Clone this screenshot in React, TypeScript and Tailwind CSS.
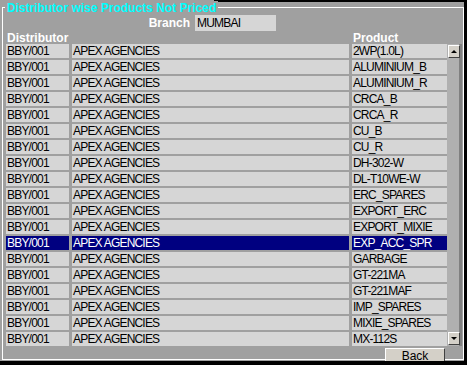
import React from "react";

const products = [
  "2WP(1.0L)",
  "ALUMINIUM_B",
  "ALUMINIUM_R",
  "CRCA_B",
  "CRCA_R",
  "CU_B",
  "CU_R",
  "DH-302-W",
  "DL-T10WE-W",
  "ERC_SPARES",
  "EXPORT_ERC",
  "EXPORT_MIXIE",
  "EXP_ACC_SPR",
  "GARBAGE",
  "GT-221MA",
  "GT-221MAF",
  "IMP_SPARES",
  "MIXIE_SPARES",
  "MX-112S",
];

const selected = "EXP_ACC_SPR";

function Row({ product }: { product: string }) {
  const on = product === selected;
  const cell = on ? "bg-[#000080] text-white" : "bg-[#d6d6d6] text-black";
  return (
    <div className="flex h-[16px] gap-[3px] pb-[2px]">
      <div className={`w-[63px] pl-[1px] leading-[14px] ${cell}`}>BBY/001</div>
      <div className={`w-[277px] pl-[1px] leading-[14px] ${cell}`}>APEX AGENCIES</div>
      <div className={`w-[95px] pl-[1px] leading-[14px] ${cell}`}>{product}</div>
    </div>
  );
}

function ScrollButton({ down }: { down?: boolean }) {
  return (
    <div className="w-[12px] h-[13px] bg-[#d4d0c8] border-t border-l border-white border-r border-b border-r-[#404040] border-b-[#404040] flex items-center justify-center">
      <svg width="6" height="4" viewBox="0 0 6 4">
        {down ? <polygon points="0,0 6,0 3,3" fill="black" /> : <polygon points="3,0 6,3 0,3" fill="black" />}
      </svg>
    </div>
  );
}

export default function App() {
  return (
    <div
      className="relative w-[467px] h-[365px] bg-[#a0a0a0] border-r-[3px] border-b-[4px] border-black overflow-hidden text-[12px] tracking-[-0.8px]"
      style={{ fontFamily: '"Liberation Sans", Arial, sans-serif' }}
    >
      {/* window frame edge along the top */}
      <div className="absolute left-[214px] right-0 top-0 h-[2px] bg-black" />

      <div className="absolute left-[5px] top-[1px] px-[2px] bg-[#a0a0a0] text-[#00ffff] font-bold text-[12px] leading-[14px] tracking-normal z-10">
        Distributor wise Products Not Priced
      </div>

      <div className="ml-[2px] mt-[7px] w-[462px] h-[353px] border border-white flex flex-col">
        <div className="flex items-center h-[16px] mt-[7px]">
          <div className="w-[192px] text-right pr-[5px] font-bold text-white tracking-normal">Branch</div>
          <div className="w-[81px] h-[16px] bg-[#d6d6d6] text-black pl-[2px] leading-[16px]">MUMBAI</div>
        </div>

        <div className="flex h-[12px] leading-[12px] font-bold text-white tracking-normal mt-[1px]">
          <div className="w-[350px] pl-[4px]">Distributor</div>
          <div>Product</div>
        </div>

        <div className="flex pl-[3px]">
          <div className="flex flex-col w-[441px]">
            {products.map((p) => (
              <Row key={p} product={p} />
            ))}
          </div>
          <div className="w-[15px] h-[302px] flex flex-col justify-between items-center pl-[1px] pt-[1px] pb-[1px] bg-[#b0b0b0] border-r-[3px] border-[#808080]">
            <ScrollButton />
            <ScrollButton down />
          </div>
        </div>

        <div className="flex justify-end pr-[18px]">
          <div className="w-[60px] h-[16px] bg-[#d4d0c8] border-t border-l border-white border-r border-b border-r-[#404040] border-b-[#404040] text-black text-center leading-[14px] tracking-normal">
            <span className="underline">B</span>ack
          </div>
        </div>
      </div>
    </div>
  );
}
